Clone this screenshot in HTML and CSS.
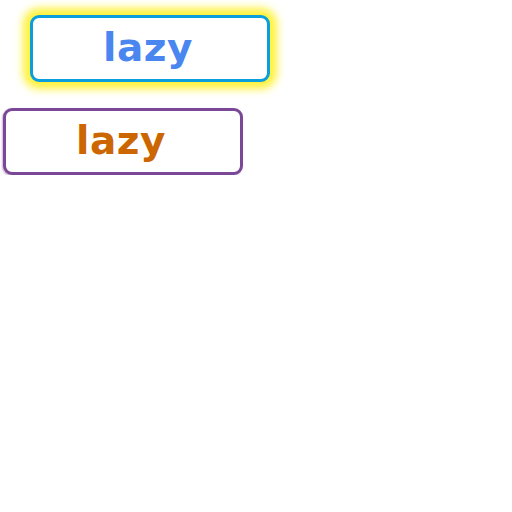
FILE: index.html
```html
<!DOCTYPE html>
<html lang="en">
<head>
    <meta charset="UTF-8">
    <title>lazy</title>
    <link rel="stylesheet" href="styles.css">
</head>
<body>
<div id="stack">
    <div class="tag glow">lazy</div>
    <div class="tag plain">lazy</div>
</div>
</body>
</html>
```

FILE: styles.css
```css
*{
    margin: 0;
    padding: 0;
    box-sizing: border-box;
}
body{
    background: #fff;
    font-family: "DejaVu Sans", "Noto Sans", sans-serif;
}
#stack{
    display: flex;
    flex-direction: column;
    align-items: flex-start;
    padding: 15px 0 0 3px;
}
.tag{
    width: 240px;
    height: 67px;
    border-radius: 9px;
    display: flex;
    align-items: center;
    justify-content: center;
    padding-right: 4px;
    padding-bottom: 2px;
    font-size: 39px;
    font-weight: 700;
    letter-spacing: 0.5px;
    background: #fff;
}
.glow{
    margin-left: 27px;
    border: 3px solid #0a9fdc;
    color: #4a86f0;
    box-shadow: 0 0 9px 7px #fff23a;
}
.plain{
    margin-top: 26px;
    border: 3px solid #7a4896;
    color: #cc6600;
    box-shadow: -1px 1px 2px rgba(122,72,150,0.4);
}
```
